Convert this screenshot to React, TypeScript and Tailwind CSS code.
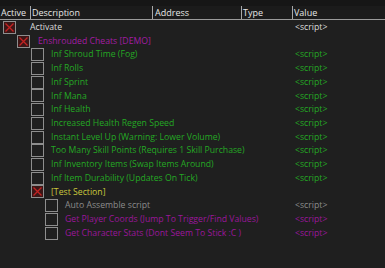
import React from 'react';

type Entry = {
  label: string;
  level: number;
  checked?: boolean;
  color: string;
  value?: string;
};

// cheat table rows, level = nesting depth
const entries: Entry[] = [
  { label: 'Activate', level: 0, checked: true, color: 'text-[#dcdcdc]', value: '<script>' },
  { label: 'Enshrouded Cheats [DEMO]', level: 1, checked: true, color: 'text-[#a21ca2]' },
  { label: 'Inf Shroud Time (Fog)', level: 2, color: 'text-[#24a824]', value: '<script>' },
  { label: 'Inf Rolls', level: 2, color: 'text-[#24a824]', value: '<script>' },
  { label: 'Inf Sprint', level: 2, color: 'text-[#24a824]', value: '<script>' },
  { label: 'Inf Mana', level: 2, color: 'text-[#24a824]', value: '<script>' },
  { label: 'Inf Health', level: 2, color: 'text-[#24a824]', value: '<script>' },
  { label: 'Increased Health Regen Speed', level: 2, color: 'text-[#24a824]', value: '<script>' },
  { label: 'Instant Level Up (Warning: Lower Volume)', level: 2, color: 'text-[#24a824]', value: '<script>' },
  { label: 'Too Many Skill Points (Requires 1 Skill Purchase)', level: 2, color: 'text-[#24a824]', value: '<script>' },
  { label: 'Inf Inventory Items (Swap Items Around)', level: 2, color: 'text-[#24a824]', value: '<script>' },
  { label: 'Inf Item Durability (Updates On Tick)', level: 2, color: 'text-[#24a824]', value: '<script>' },
  { label: '[Test Section]', level: 2, checked: true, color: 'text-[#c9c83c]' },
  { label: 'Auto Assemble script', level: 3, color: 'text-[#8c8c8c]', value: '<script>' },
  { label: 'Get Player Coords (Jump To Trigger/Find Values)', level: 3, color: 'text-[#9b169b]', value: '<script>' },
  { label: 'Get Character Stats (Dont Seem To Stick :C )', level: 3, color: 'text-[#9b169b]', value: '<script>' },
];

const boxLeft = ['ml-[3px]', 'ml-[17px]', 'ml-[31px]', 'ml-[45px]'];
const textGap = ['ml-[14px]', 'ml-[8px]', 'ml-[7px]', 'ml-[7px]'];

const CheckBox = ({ checked }: { checked?: boolean }) => (
  <div className={`w-[13px] h-[13px] shrink-0 border border-[#8e8e8e] ${checked ? 'bg-[#3c1616]' : 'bg-transparent'} relative`}>
    {checked && (
      <svg viewBox="0 0 11 11" className="absolute inset-0 w-[11px] h-[11px]">
        <path d="M1.5 1.5 L9.5 9.5 M9.5 1.5 L1.5 9.5" stroke="#c42222" strokeWidth="1.3" />
      </svg>
    )}
  </div>
);

export default function App() {
  return (
    <div className="w-[385px] h-[268px] bg-[#1f1f1f] overflow-hidden text-[8.7px] leading-none" style={{ fontFamily: '"Open Sans", "Noto Sans", sans-serif' }}>
      <div className="h-[6px] bg-[#161616]" />
      <div className="flex h-[14px] bg-[#1b1b1b] border-b border-[#9a9a9a] text-[#e6e6e6] items-center text-[9px]">
        <div className="w-[30px] pl-[1px]">Active</div>
        <div className="w-[122px] h-full border-l border-[#a8a8a8] pl-[1px] flex items-center">Description</div>
        <div className="w-[89px] h-full border-l border-[#a8a8a8] pl-[2px] flex items-center">Address</div>
        <div className="w-[51px] h-full border-l border-[#a8a8a8] pl-[1px] flex items-center">Type</div>
        <div className="flex-1 h-full border-l border-[#a8a8a8] pl-[1px] flex items-center">Value</div>
      </div>
      <div className="pt-[0.5px]">
        {entries.map((e, i) => (
          <div key={i} className="flex items-center h-[13.73px]">
            <div className="w-[293px] flex items-center overflow-hidden whitespace-nowrap">
              <div className={boxLeft[e.level]}>
                <CheckBox checked={e.checked} />
              </div>
              <span className={`${textGap[e.level]} ${e.color}`}>{e.label}</span>
            </div>
            <div className={`pl-[2px] ${e.color}`}>{e.value ?? ''}</div>
          </div>
        ))}
      </div>
    </div>
  );
}
